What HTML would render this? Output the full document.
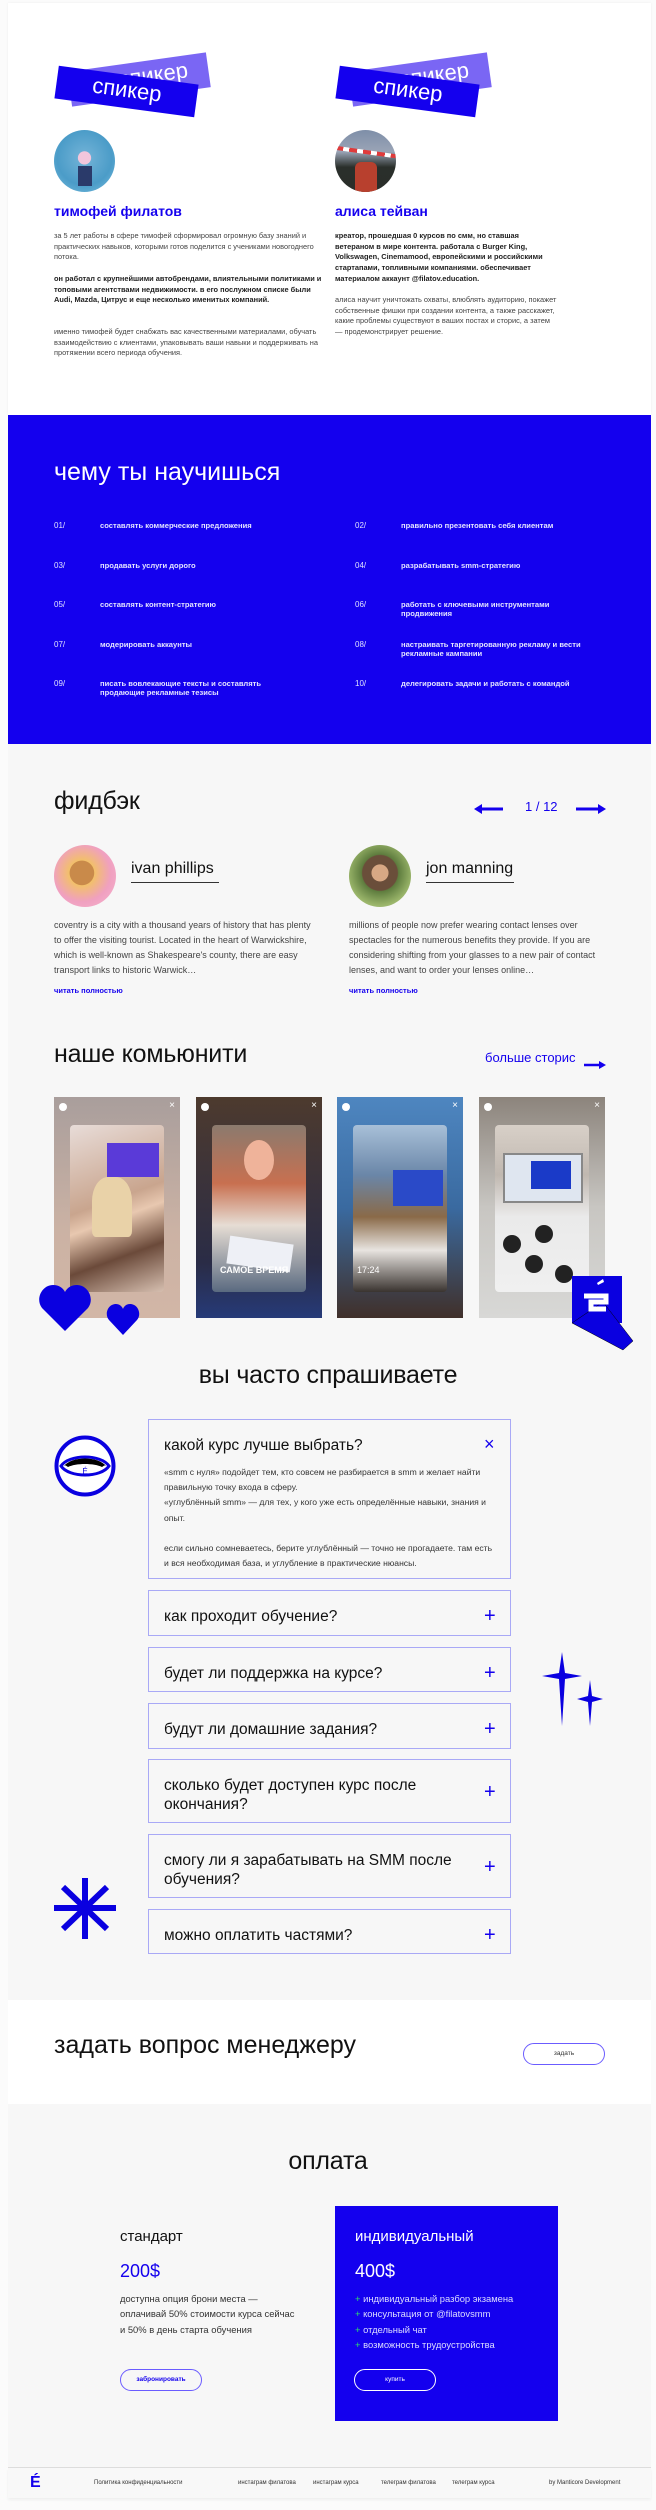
<!DOCTYPE html>
<html><head><meta charset="utf-8">
<style>
*{margin:0;padding:0;box-sizing:border-box}
body{width:656px;height:2510px;background:#fbfbfb;font-family:"Liberation Sans","DejaVu Sans",sans-serif;position:relative;overflow:hidden;color:#111}
.a{position:absolute}
.sec{position:absolute;left:8px;width:643px}
.t{position:absolute;white-space:nowrap}
.p{font-size:7.4px;line-height:10.7px;color:#444;white-space:normal}
.h2{font-size:25px;color:#111;letter-spacing:-0.2px}
.blue{color:#1400ee}
.li .n{position:absolute;font-size:8px;color:#dfe0ff}
.li .x{position:absolute;font-size:7.6px;line-height:9px;color:#e4e4ff;font-weight:bold;width:190px}
.fb{font-size:9px;line-height:15px;color:#444;white-space:normal;width:258px}
.card{position:absolute;top:1097px;width:126px;height:221px;overflow:hidden}
.card .in{position:absolute;left:16px;top:28px;width:94px;height:167px;border-radius:4px}
.card .hd{position:absolute;left:5px;top:6px;width:8px;height:8px;border-radius:50%;background:#fff}
.card .cl{position:absolute;right:5px;top:3px;color:#fff;font-size:10px}
.faq{position:absolute;left:148px;width:363px;border:1px solid #a9a9f6;background:#f7f7f7}
.faq .q{position:absolute;left:15px;top:16px;font-size:15.5px;line-height:19px;color:#111;width:300px}
.faq .pl{position:absolute;left:335px;font-size:20px;color:#1400ee;line-height:20px}
.btn{position:absolute;height:22px;border:1px solid #6b5cff;border-radius:11px;font-size:6.5px;text-align:center;line-height:20px}
</style></head><body>

<!-- top speakers -->
<div class="sec" style="top:3px;height:412px;background:#fff;box-shadow:0 0 3px rgba(0,0,0,.05)"></div>

<div class="a" style="left:69px;top:62px;width:140px;height:35px;background:#7a66f4;transform:rotate(-8deg);overflow:hidden"><div class="t" style="left:50px;top:2px;color:#fff;font-size:22px">спикер</div></div>
<div class="a" style="left:56px;top:75px;width:141px;height:33px;background:#1400ee;transform:rotate(7.7deg)"><div class="t" style="left:36px;top:2px;color:#fff;font-size:22px">спикер</div></div>
<div class="a" style="left:350px;top:62px;width:140px;height:35px;background:#7a66f4;transform:rotate(-8deg);overflow:hidden"><div class="t" style="left:50px;top:2px;color:#fff;font-size:22px">спикер</div></div>
<div class="a" style="left:337px;top:75px;width:141px;height:33px;background:#1400ee;transform:rotate(7.7deg)"><div class="t" style="left:36px;top:2px;color:#fff;font-size:22px">спикер</div></div>

<div class="a" style="left:54px;top:130px;width:61px;height:62px;border-radius:50%;background:radial-gradient(circle at 50% 45%,#f3c6dc 0 14%,#6aaed4 15%,#4b9cc8 60%,#7cc0e0);overflow:hidden">
<div class="a" style="left:24px;top:36px;width:14px;height:20px;background:#2a3a6a"></div></div>
<div class="a" style="left:335px;top:130px;width:61px;height:62px;border-radius:50%;background:linear-gradient(#7e8ea8 0,#9aa4b6 35%,#2a2f2b 60%,#2a2e2a);overflow:hidden">
<div class="a" style="left:0;top:20px;width:61px;height:4px;background:repeating-linear-gradient(90deg,#e03b3b 0 8px,#fff 8px 14px);transform:rotate(8deg)"></div>
<div class="a" style="left:20px;top:32px;width:22px;height:30px;background:#b8402e;border-radius:6px 6px 0 0"></div></div>

<div class="t blue" style="left:54px;top:203px;font-size:14px;font-weight:bold">тимофей филатов</div>
<div class="t blue" style="left:335px;top:203px;font-size:14px;font-weight:bold">алиса тейван</div>

<div class="t p" style="left:54px;top:231px;width:270px">за 5 лет работы в сфере тимофей сформировал огромную базу знаний и практических навыков, которыми готов поделится с учениками новогоднего потока.</div>
<div class="t p" style="left:54px;top:274px;width:270px;color:#222;font-weight:bold">он работал с крупнейшими автобрендами, влиятельными политиками и топовыми агентствами недвижимости. в его послужном списке были Audi, Mazda, Цитрус и еще несколько именитых компаний.</div>
<div class="t p" style="left:54px;top:327px;width:275px">именно тимофей будет снабжать вас качественными материалами, обучать взаимодействию с клиентами, упаковывать ваши навыки и поддерживать на протяжении всего периода обучения.</div>

<div class="t p" style="left:335px;top:231px;width:222px;color:#222;font-weight:bold">креатор, прошедшая 0 курсов по смм, но ставшая ветераном в мире контента. работала с Burger King, Volkswagen, Cinemamood, европейскими и российскими стартапами, топливными компаниями. обеспечивает материалом аккаунт @filatov.education.</div>
<div class="t p" style="left:335px;top:295px;width:222px">алиса научит уничтожать охваты, влюблять аудиторию, покажет собственные фишки при создании контента, а также расскажет, какие проблемы существуют в ваших постах и сторис, а затем — продемонстрирует решение.</div>

<!-- blue learn -->
<div class="sec" style="top:415px;height:329px;background:#1400ee"></div>
<div class="t" style="left:54px;top:458px;font-size:25px;color:#fff">чему ты научишься</div>
<div class="li">
<div class="n" style="left:54px;top:521px">01/</div><div class="x" style="left:100px;top:521px">составлять коммерческие предложения</div>
<div class="n" style="left:355px;top:521px">02/</div><div class="x" style="left:401px;top:521px">правильно презентовать себя клиентам</div>
<div class="n" style="left:54px;top:561px">03/</div><div class="x" style="left:100px;top:561px">продавать услуги дорого</div>
<div class="n" style="left:355px;top:561px">04/</div><div class="x" style="left:401px;top:561px">разрабатывать smm-стратегию</div>
<div class="n" style="left:54px;top:600px">05/</div><div class="x" style="left:100px;top:600px">составлять контент-стратегию</div>
<div class="n" style="left:355px;top:600px">06/</div><div class="x" style="left:401px;top:600px">работать с ключевыми инструментами продвижения</div>
<div class="n" style="left:54px;top:640px">07/</div><div class="x" style="left:100px;top:640px">модерировать аккаунты</div>
<div class="n" style="left:355px;top:640px">08/</div><div class="x" style="left:401px;top:640px;width:200px">настраивать таргетированную рекламу и вести рекламные кампании</div>
<div class="n" style="left:54px;top:679px">09/</div><div class="x" style="left:100px;top:679px">писать вовлекающие тексты и составлять продающие рекламные тезисы</div>
<div class="n" style="left:355px;top:679px">10/</div><div class="x" style="left:401px;top:679px;width:200px">делегировать задачи и работать с командой</div>
</div>

<!-- gray big area -->
<div class="sec" style="top:744px;height:1256px;background:#f7f7f7"></div>

<div class="t h2" style="left:54px;top:787px">фидбэк</div>
<svg class="a" style="left:474px;top:803px" width="30" height="12" viewBox="0 0 30 12"><path d="M29 6H6" stroke="#1400ee" stroke-width="3"/><path d="M0 6L8 1V11Z" fill="#1400ee"/></svg>
<div class="t blue" style="left:525px;top:799px;font-size:13px">1 / 12</div>
<svg class="a" style="left:576px;top:803px" width="30" height="12" viewBox="0 0 30 12"><path d="M0 6H24" stroke="#1400ee" stroke-width="3"/><path d="M30 6L22 1V11Z" fill="#1400ee"/></svg>

<div class="a" style="left:54px;top:845px;width:62px;height:62px;border-radius:50%;background:radial-gradient(circle at 45% 45%,#c98a4a 0 25%,#f2c06a 26%,#f0a0c0 60%,#f6b6d0)"></div>
<div class="a" style="left:349px;top:845px;width:62px;height:62px;border-radius:50%;background:radial-gradient(circle at 50% 45%,#d7a884 0 18%,#6a4e3a 19% 38%,#5e7c3e 40%,#9ab56a 70%,#c8d8a8)"></div>
<div class="t" style="left:131px;top:860px;font-size:16px;color:#111">ivan phillips</div>
<div class="a" style="left:131px;top:882px;width:88px;height:1px;background:#333"></div>
<div class="t" style="left:426px;top:860px;font-size:16px;color:#111">jon manning</div>
<div class="a" style="left:426px;top:882px;width:88px;height:1px;background:#333"></div>
<div class="t fb" style="left:54px;top:918px">coventry is a city with a thousand years of history that has plenty to offer the visiting tourist. Located in the heart of Warwickshire, which is well-known as Shakespeare's county, there are easy transport links to historic Warwick…</div>
<div class="t fb" style="left:349px;top:918px">millions of people now prefer wearing contact lenses over spectacles for the numerous benefits they provide. If you are considering shifting from your glasses to a new pair of contact lenses, and want to order your lenses online…</div>
<div class="t blue" style="left:54px;top:986px;font-size:7.5px;font-weight:bold">читать полностью</div>
<div class="t blue" style="left:349px;top:986px;font-size:7.5px;font-weight:bold">читать полностью</div>

<div class="t h2" style="left:54px;top:1040px">наше комьюнити</div>
<div class="t blue" style="left:485px;top:1050px;font-size:13px">больше сторис</div>
<svg class="a" style="left:584px;top:1060px" width="22" height="10" viewBox="0 0 22 10"><path d="M0 5H16" stroke="#1400ee" stroke-width="2.5"/><path d="M22 5L15 1V9Z" fill="#1400ee"/></svg>

<div class="card" style="left:54px;background:linear-gradient(#a99e9c,#cbb2a4 60%,#d2b6a6)"><div class="hd"></div><div class="cl">×</div>
<div class="in" style="background:linear-gradient(160deg,#e8dcd8,#c9a58e 45%,#e8c8b0 55%,#6b4a3a 75%,#d6bfb0)"><div class="a" style="left:37px;top:18px;width:52px;height:34px;background:#5a3ad8"></div><div class="a" style="left:22px;top:52px;width:40px;height:60px;border-radius:40% 40% 10% 10%;background:#e9d2a8"></div></div></div>
<div class="card" style="left:196px;background:linear-gradient(#4d3a2e,#2a2c46 75%,#263a78)"><div class="hd"></div><div class="cl">×</div>
<div class="in" style="background:linear-gradient(#8b7a6e,#c87050 35%,#e6ddd4 60%,#5a6a80)"><div class="a" style="left:32px;top:15px;width:30px;height:40px;border-radius:50%;background:#efb39a"></div><div class="a" style="left:16px;top:115px;width:64px;height:28px;background:#eef0f6;transform:rotate(8deg)"></div><div class="t" style="left:8px;top:140px;font-size:9px;font-weight:bold;color:#fff">САМОЕ ВРЕМЯ</div></div></div>
<div class="card" style="left:337px;background:linear-gradient(#4e86c0,#3a6aa0 50%,#40302a)"><div class="hd"></div><div class="cl">×</div>
<div class="in" style="background:linear-gradient(#a8c0d8,#6a86a8 30%,#8a6a48 55%,#e8e4e0 75%,#3a3430)"><div class="a" style="left:40px;top:45px;width:50px;height:36px;background:#2a4ac8"></div><div class="t" style="left:4px;top:140px;font-size:9px;color:#fff">17:24</div></div></div>
<div class="card" style="left:479px;background:linear-gradient(#8c847c,#c8c6c2 50%,#d8d8d6)"><div class="hd"></div><div class="cl">×</div>
<div class="in" style="background:linear-gradient(#d8d0c8,#c0b8b0 30%,#eaeaea 55%,#f0f0f0)"><div class="a" style="left:8px;top:28px;width:80px;height:50px;background:#dfe6f0;border:2px solid #888"></div><div class="a" style="left:36px;top:36px;width:40px;height:28px;background:#1a3ac8"></div><div class="a" style="left:8px;top:110px;width:18px;height:18px;border-radius:50%;background:#222"></div><div class="a" style="left:40px;top:100px;width:18px;height:18px;border-radius:50%;background:#222"></div><div class="a" style="left:30px;top:130px;width:18px;height:18px;border-radius:50%;background:#222"></div><div class="a" style="left:60px;top:140px;width:18px;height:18px;border-radius:50%;background:#222"></div></div></div>

<svg class="a" style="left:39px;top:1284px" width="102" height="52" viewBox="0 0 102 52">
<path d="M26 47L3 24C-4 15 3 1 14 1C20 1 24 4 26 8C28 4 32 1 38 1C49 1 56 15 49 24Z" fill="#0a00e0"/>
<path d="M84 51L70 36C65 30 69 20 77 20C80 20 83 22 84 25C85 22 88 20 91 20C99 20 103 30 98 36Z" fill="#0a00e0"/></svg>
<svg class="a" style="left:570px;top:1274px" width="66" height="78" viewBox="0 0 66 78">
<rect x="2" y="2" width="50" height="47" fill="#0a00e0"/>
<path d="M2 49L33 28L63 67L53 76Z" fill="#0a00e0" stroke="#000" stroke-width=".5"/>
<path d="M14 22h22v6H21v7h15" stroke="#fff" stroke-width="5" fill="none"/><path d="M27 9l6-4 1 3-6 3z" fill="#fff"/></svg>

<div class="t h2" style="left:0;width:656px;text-align:center;top:1361px">вы часто спрашиваете</div>

<svg class="a" style="left:54px;top:1435px" width="62" height="62" viewBox="0 0 62 62">
<ellipse cx="31" cy="31" rx="28.5" ry="28.5" fill="#fff" stroke="#0a00e0" stroke-width="4"/>
<path d="M7 31C15 19 47 19 55 31C47 43 15 43 7 31Z" fill="#fff" stroke="#0a00e0" stroke-width="3"/>
<path d="M10 31C18 21 44 21 52 31C44 27 18 27 10 31Z" fill="#000"/>
<path d="M11 30C18 23 44 23 51 30L48 32C40 28 22 28 14 32Z" fill="#000"/>
<text x="31" y="39" font-size="8" fill="#0a00e0" text-anchor="middle" font-family="Liberation Sans">É</text></svg>

<div class="faq" style="top:1419px;height:160px"><div class="q">какой курс лучше выбрать?</div><div class="pl" style="top:14px;font-size:18px">×</div>
<div class="t" style="left:15px;top:45px;font-size:8.6px;line-height:15.2px;color:#333;white-space:normal;width:335px">«smm с нуля» подойдет тем, кто совсем не разбирается в smm и желает найти правильную точку входа в сферу.<br>«углублённый smm» — для тех, у кого уже есть определённые навыки, знания и опыт.<br><br>если сильно сомневаетесь, берите углублённый — точно не прогадаете. там есть и вся необходимая база, и углубление в практические нюансы.</div></div>
<div class="faq" style="top:1590px;height:46px"><div class="q">как проходит обучение?</div><div class="pl" style="top:15px">+</div></div>
<div class="faq" style="top:1647px;height:45px"><div class="q">будет ли поддержка на курсе?</div><div class="pl" style="top:15px">+</div></div>
<div class="faq" style="top:1703px;height:46px"><div class="q">будут ли домашние задания?</div><div class="pl" style="top:15px">+</div></div>
<div class="faq" style="top:1759px;height:64px"><div class="q">сколько будет доступен курс после окончания?</div><div class="pl" style="top:22px">+</div></div>
<div class="faq" style="top:1834px;height:64px"><div class="q">смогу ли я зарабатывать на SMM после обучения?</div><div class="pl" style="top:22px">+</div></div>
<div class="faq" style="top:1909px;height:45px"><div class="q">можно оплатить частями?</div><div class="pl" style="top:15px">+</div></div>

<svg class="a" style="left:540px;top:1650px" width="70" height="78" viewBox="0 0 70 78">
<path d="M22 2L25 23L42 26L25 29L22 76L19 29L2 26L19 23Z" fill="#0a00e0"/>
<path d="M50 30L52 46L63 49L52 52L50 76L48 52L37 49L48 46Z" fill="#0a00e0"/></svg>
<svg class="a" style="left:54px;top:1878px" width="62" height="61" viewBox="0 0 62 61">
<g stroke="#0a00e0" stroke-width="6"><path d="M31 0V61"/><path d="M0 30H62"/><path d="M9 9L53 51"/><path d="M53 9L9 51"/></g></svg>

<!-- ask manager -->
<div class="sec" style="top:2000px;height:104px;background:#fff"></div>
<div class="t" style="left:54px;top:2031px;font-size:25px;color:#111">задать вопрос менеджеру</div>
<div class="btn" style="left:523px;top:2043px;width:82px;color:#333">задать</div>

<div class="sec" style="top:2104px;height:364px;background:#f7f7f7"></div>
<div class="t h2" style="left:0;width:656px;text-align:center;top:2147px">оплата</div>
<div class="t" style="left:120px;top:2228px;font-size:15px;color:#111">стандарт</div>
<div class="t blue" style="left:120px;top:2261px;font-size:18px">200$</div>
<div class="t" style="left:120px;top:2291px;font-size:9.4px;line-height:15.4px;color:#333">доступна опция брони места —<br>оплачивай 50% стоимости курса сейчас<br>и 50% в день старта обучения</div>
<div class="btn" style="left:120px;top:2369px;width:82px;color:#1400ee;font-weight:bold">забронировать</div>

<div class="a" style="left:335px;top:2206px;width:223px;height:215px;background:#1400ee"></div>
<div class="t" style="left:355px;top:2228px;font-size:15px;color:#fff">индивидуальный</div>
<div class="t" style="left:355px;top:2261px;font-size:18px;color:#fff">400$</div>
<div class="t" style="left:355px;top:2291px;font-size:9.4px;line-height:15.4px;color:#dcdcff"><span style="color:#2fe06a">+</span> индивидуальный разбор экзамена<br><span style="color:#2fe06a">+</span> консультация от @filatovsmm<br><span style="color:#2fe06a">+</span> отдельный чат<br><span style="color:#2fe06a">+</span> возможность трудоустройства</div>
<div class="btn" style="left:354px;top:2369px;width:82px;border-color:#fff;color:#fff">купить</div>

<!-- footer -->
<div class="sec" style="top:2467px;height:1px;background:#ddd"></div>
<div class="sec" style="top:2468px;height:30px;background:#f8f8f8;box-shadow:0 2px 3px rgba(0,0,0,.05)"></div>
<div class="t" style="left:30px;top:2474px;font-size:16px;font-weight:bold;color:#1400ee">É</div>
<div class="t" style="left:94px;top:2480px;font-size:6px;color:#333">Политика конфиденциальности</div>
<div class="t" style="left:238px;top:2480px;font-size:6px;color:#333">инстаграм филатова</div>
<div class="t" style="left:313px;top:2480px;font-size:6px;color:#333">инстаграм курса</div>
<div class="t" style="left:381px;top:2480px;font-size:6px;color:#333">телеграм филатова</div>
<div class="t" style="left:452px;top:2480px;font-size:6px;color:#333">телеграм курса</div>
<div class="t" style="left:549px;top:2480px;font-size:6px;color:#333">by Manticore Development</div>
</body></html>
